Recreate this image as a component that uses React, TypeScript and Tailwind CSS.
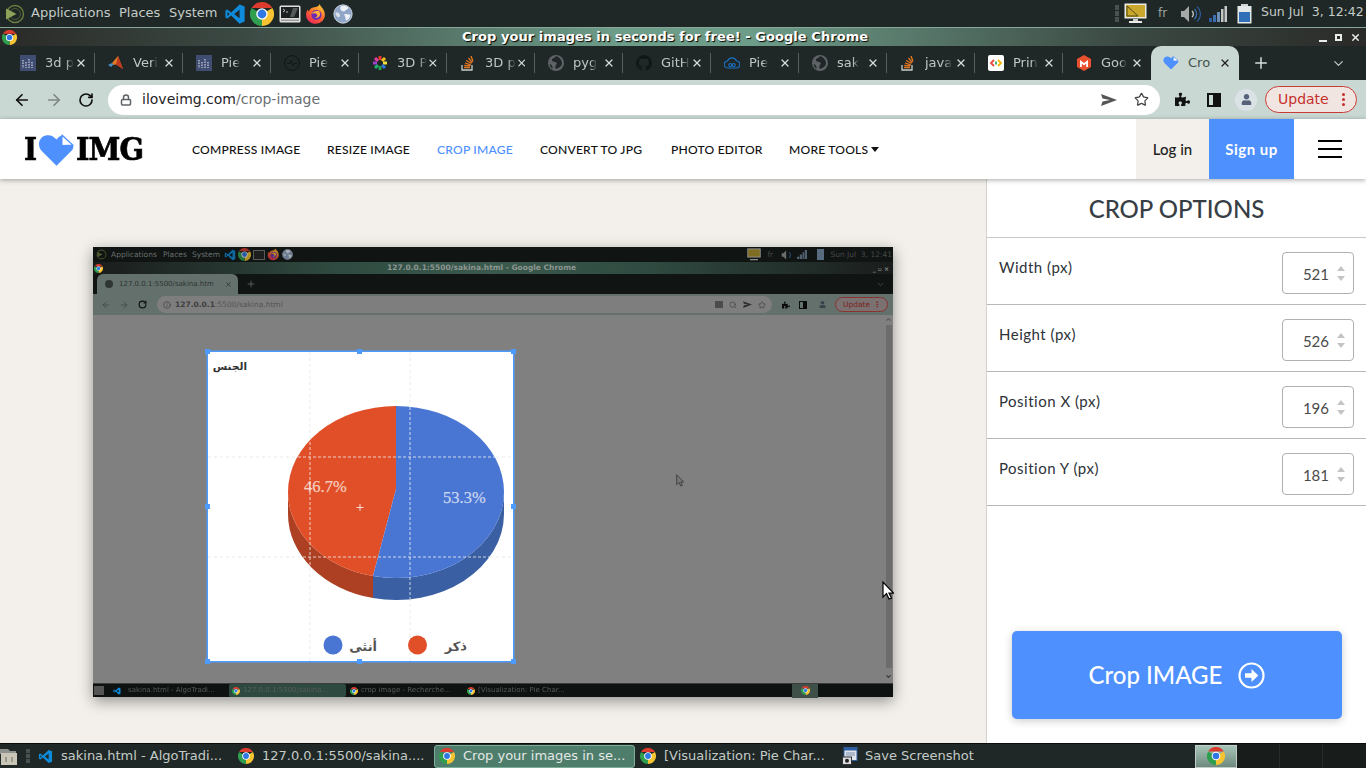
import { ArrowLeft, ArrowRight, RotateCw, Lock, Star, X, Plus, ChevronDown, ChevronUp, Search, Info } from "lucide-react";
import { FaUser, FaPuzzlePiece } from "react-icons/fa";

const UI = "font-['DejaVu_Sans',sans-serif]";
const RALE = "font-['Lato',sans-serif]";

function ChromeIcon({ size = 16 }: { size?: number }) {
  return (
    <svg width={size} height={size} viewBox="0 0 48 48" className="shrink-0">
      <path d="M3.2 12A24 24 0 0 1 44.8 12L24 12Z" fill="#dc3b2e" />
      <path d="M44.8 12A24 24 0 0 1 24 48L24 24Z" fill="#f6c333" />
      <path d="M24 48A24 24 0 0 1 3.2 12L24 24Z" fill="#2f9e4f" />
      <circle cx="24" cy="24" r="11.5" fill="#fff" />
      <circle cx="24" cy="24" r="8.8" fill="#2f78e4" />
    </svg>
  );
}

function VsCode({ size = 22 }: { size?: number }) {
  return (
    <svg width={size} height={size} viewBox="0 0 24 24" className="shrink-0">
      <path d="M17 1.5 7.8 10.4 3.6 7.2 1.5 8.3v7.4l2.1 1.1 4.2-3.2L17 22.5l5.5-2.2V3.7ZM17 7.3v9.4l-6-4.7ZM3.8 9.6 6 12l-2.2 2.4Z" fill="#0f8bdc" />
    </svg>
  );
}

function Firefox({ size = 22 }: { size?: number }) {
  return (
    <svg width={size} height={size} viewBox="0 0 24 24" className="shrink-0">
      <defs>
        <linearGradient id="ffg" x1="0.8" y1="0" x2="0.2" y2="1">
          <stop offset="0" stopColor="#ffd23a" />
          <stop offset="0.5" stopColor="#ff6a2a" />
          <stop offset="1" stopColor="#e8245e" />
        </linearGradient>
      </defs>
      <path d="M16 1c.6 2.500 2.600 3.500 4 6 2.600 4.500 2 9.500-1 12.500a10.500 10.500 0 0 1-16-1C.5 15 .8 10 3 7c.2 1 .7 1.700 1.400 2.200C5 7 6.500 5.600 8 5.200 11 4.300 15.200 4 16 1Z" fill="url(#ffg)" />
      <circle cx="12.500" cy="13" r="5.500" fill="#6c2bb5" />
      <path d="M7 12c2-1.500 5-1 6 .5 1.500 2-1 4-3 3 2 2 6 .5 6.500-3 .2-1.500-.5-3-1.500-4-2-.5-6 0-8 3.500Z" fill="#ffb03a" />
    </svg>
  );
}

function Globe({ size = 20 }: { size?: number }) {
  return (
    <svg width={size} height={size} viewBox="0 0 24 24" className="shrink-0">
      <circle cx="12" cy="12" r="11" fill="#8fa6c9" />
      <circle cx="12" cy="12" r="11" fill="none" stroke="#dfe5ee" strokeWidth="1" />
      <path d="M9 3c3-1.500 7-1 9 1 1 1.500-1 3-3 3.500-1 1.500-3 2-4 1-1-.5-3-2-2-5.500ZM14 12c2 0 5 .5 7 1-.5 3-2 5.500-5 7-1-1.500-1.500-3-1-4-1-1.500-2-3-1-4Z" fill="#eef1f6" />
      <path d="M3 10c2-.5 4 .5 5 2s.5 3-1 4c-2 0-4-2-4-6Z" fill="#d8dfe9" />
    </svg>
  );
}

function Terminal() {
  return (
    <svg width="22" height="18" viewBox="0 0 22 18" className="shrink-0">
      <rect x="0.500" y="0.500" width="21" height="17" rx="1.500" fill="#dfe1df" />
      <rect x="2" y="2" width="18" height="11" fill="#1c2020" />
      <path d="M4 4l2 1.500L4 7M7 7h2" stroke="#e8e8e8" strokeWidth="0.800" fill="none" />
      <path d="M14 3h5l-4 9h-4Z" fill="#555b5a" />
      <rect x="2" y="14.500" width="18" height="1.500" fill="#9a9d9b" />
    </svg>
  );
}

function StartIcon() {
  return (
    <svg width="20" height="20" viewBox="0 0 20 20" className="shrink-0">
      <circle cx="10" cy="10" r="8.500" fill="none" stroke="#6f7f3f" strokeWidth="1.300" />
      <circle cx="10" cy="10" r="5.500" fill="none" stroke="#5c6a38" strokeWidth="0.800" />
      <path d="M1 4.500 11.500 10 1 15.500Z" fill="#8ea35a" />
    </svg>
  );
}

function ScreenTray() {
  return (
    <svg width="23" height="21" viewBox="0 0 23 21" className="shrink-0">
      <rect x="0.500" y="0.500" width="22" height="15" fill="#e9ebe9" />
      <rect x="2" y="2" width="19" height="12" fill="#c9a82c" />
      <path d="M3 3 14 13H3Z" fill="none" stroke="#51461a" strokeWidth="1" />
      <rect x="9" y="16" width="5" height="2" fill="#c8cbc8" />
      <rect x="5" y="18" width="13" height="2" fill="#e9ebe9" />
    </svg>
  );
}

function VolumeTray() {
  return (
    <svg width="21" height="18" viewBox="0 0 21 18" className="shrink-0">
      <path d="M1 6h3l5-5v16l-5-5H1Z" fill="#a5aaa8" />
      <path d="M12 6a4 4 0 0 1 0 6" stroke="#c9ccca" strokeWidth="1.300" fill="none" />
      <path d="M14.500 4a7 7 0 0 1 0 10" stroke="#3a6fb0" strokeWidth="1.300" fill="none" />
      <path d="M17 1.500a10 10 0 0 1 0 15" stroke="#2d5c99" strokeWidth="1.300" fill="none" />
    </svg>
  );
}

function SignalTray() {
  return (
    <svg width="18" height="16" viewBox="0 0 18 16" className="shrink-0">
      <rect x="0" y="12" width="3" height="4" fill="#2f5f9e" />
      <rect x="4" y="9" width="3" height="7" fill="#3c6fb0" />
      <rect x="8" y="6" width="3" height="10" fill="#6c8fb8" />
      <rect x="12" y="3" width="2.500" height="13" fill="#c5c9c7" />
      <rect x="15.500" y="0" width="2.500" height="16" fill="#c5c9c7" />
    </svg>
  );
}

function BatteryTray() {
  return (
    <svg width="15" height="20" viewBox="0 0 15 20" className="shrink-0">
      <rect x="4" y="0" width="7" height="2" fill="#cfd3d1" />
      <rect x="0.500" y="2" width="14" height="17.500" fill="#e4e8e6" />
      <rect x="2" y="8" width="11" height="10" fill="#2f6fb8" />
    </svg>
  );
}

function TrayHandle() {
  return (
    <div className="mr-[5px] flex flex-col gap-[1px]">
      <span className="h-[5px] w-[4px] bg-[#4a504e]" />
      <span className="h-[5px] w-[4px] bg-[#4a504e]" />
      <span className="h-[5px] w-[4px] bg-[#4a504e]" />
    </div>
  );
}

function TopPanel() {
  return (
    <div className={`flex h-[27px] items-center bg-[#1f2826] text-[13px] text-[#c4cbc8] ${UI}`}>
      <div className="ml-[5px] w-[26px]">
        <StartIcon />
      </div>
      <span className="w-[88px] pb-[2px]">Applications</span>
      <span className="w-[50px] pb-[2px]">Places</span>
      <span className="w-[55px] pb-[2px]">System</span>
      <div className="flex items-center gap-[4px]">
        <VsCode />
        <ChromeIcon size={24} />
        <div className="ml-[1px]">
          <Terminal />
        </div>
        <Firefox />
        <div className="ml-[2px]">
          <Globe />
        </div>
      </div>
      <div className="ml-auto flex items-center">
        <TrayHandle />
        <ScreenTray />
        <span className="ml-[11px] w-[22px] pb-[2px] text-[12px] text-[#9da3a1]">fr</span>
        <VolumeTray />
        <div className="ml-[8px]">
          <SignalTray />
        </div>
        <div className="ml-[10px]">
          <BatteryTray />
        </div>
        <span className="ml-[9px] w-[105px] pb-[2px] text-[12.500px] whitespace-pre">Sun Jul  3, 12:42</span>
      </div>
    </div>
  );
}

function TitleBar() {
  return (
    <div className={`flex h-[19px] items-center border-t border-[#86a899] bg-[linear-gradient(90deg,#2a2a28_0%,#3c4a44_18%,#6d9c88_45%,#6d9c88_55%,#3c4a44_82%,#2a2a28_100%)] ${UI}`}>
      <div className="ml-[2px] w-[460px]">
        <ChromeIcon size={15} />
      </div>
      <span className="text-[13px] font-bold tracking-[0.05px] whitespace-nowrap text-white [text-shadow:1px_1px_1px_#000]">
        Crop your images in seconds for free! - Google Chrome
      </span>
      <div className="ml-auto mr-[5px] flex items-center gap-[8px] text-[#e8ecea]">
        <span className="mt-[8px] h-[2px] w-[8px] bg-[#e8ecea]" />
        <span className="h-[7px] w-[7px] border-2 border-[#e8ecea]" />
        <X size={11} strokeWidth={3} />
      </div>
    </div>
  );
}

function TabIcon({ kind }: { kind: string }) {
  if (kind === "bars")
    return (
      <svg width="16" height="16" viewBox="0 0 16 16">
        <rect width="16" height="16" fill="#3f4d72" />
        <path d="M3 5v8M6 7v6M9 4v9M12 7v6" stroke="#e8ebf2" strokeWidth="1" strokeDasharray="1.500 1" />
      </svg>
    );
  if (kind === "matlab")
    return (
      <svg width="16" height="16" viewBox="0 0 16 16">
        <path d="M0 10l4-2 2 1-3 3Z" fill="#4a90c8" />
        <path d="M4 8l6-7 5 13-3-2-3-3-3 1Z" fill="#e07a2a" />
        <path d="M10 1l-2 9 4 2 3 2Z" fill="#c0391f" />
      </svg>
    );
  if (kind === "pulse")
    return (
      <svg width="16" height="16" viewBox="0 0 16 16" fill="none" stroke="#111716" strokeWidth="1">
        <circle cx="8" cy="8" r="7.500" />
        <path d="M3 8.500h3l1-3 2 5 1-2h3" />
      </svg>
    );
  if (kind === "wheel")
    return (
      <svg width="16" height="16" viewBox="0 0 16 16" fill="none" strokeWidth="3">
        <path d="M8 1v4" stroke="#e63a2e" />
        <path d="M13 3l-3 3" stroke="#f4c020" />
        <path d="M15 8h-4" stroke="#f0e040" />
        <path d="M13 13l-3-3" stroke="#2f78e4" />
        <path d="M8 15v-4" stroke="#22a04a" />
        <path d="M3 13l3-3" stroke="#1fb070" />
        <path d="M1 8h4" stroke="#a040d0" />
        <path d="M3 3l3 3" stroke="#e040a0" />
      </svg>
    );
  if (kind === "so")
    return (
      <svg width="16" height="16" viewBox="0 0 16 16" fill="none">
        <path d="M2 10v5h10v-5" stroke="#c8cccb" strokeWidth="1.300" />
        <path d="M4 12.500h6M4.300 10.300l6 .6M5 8l5.800 1.800M6.300 5.500l5.200 3M8.500 3l3.800 4.600M11 1l2 5.500" stroke="#e87922" strokeWidth="1.300" />
      </svg>
    );
  if (kind === "globe")
    return (
      <svg width="16" height="16" viewBox="0 0 16 16">
        <circle cx="8" cy="8" r="8" fill="#5f6368" />
        <path d="M8 1c-1 2-3 2-4 3s1 3 3 3 2 2 1 3-1 3 0 4c3-1 6-3 6-6s-3-6-6-7ZM1.500 9c1 0 2.500 1 3 3 .2 1 0 1.500-.5 1.500C3 12.500 2 11 1.500 9Z" fill="#1f2826" />
      </svg>
    );
  if (kind === "github")
    return (
      <svg width="16" height="16" viewBox="0 0 16 16">
        <path d="M8 0a8 8 0 0 0-2.500 15.600c.4 0 .5-.2.500-.4v-1.400c-2.200.5-2.700-1-2.700-1-.4-.9-.9-1.200-.9-1.200-.7-.5 0-.5 0-.5.800.1 1.200.8 1.200.8.700 1.200 1.900.9 2.300.7.100-.5.300-.9.500-1.100-1.800-.2-3.600-.9-3.600-4 0-.9.300-1.600.8-2.100-.1-.2-.4-1 .1-2.100 0 0 .7-.2 2.200.8a7.600 7.600 0 0 1 4 0c1.500-1 2.200-.8 2.200-.8.500 1.100.2 1.900.1 2.100.5.600.8 1.300.8 2.100 0 3.100-1.900 3.800-3.700 4 .3.300.6.800.6 1.500v2.200c0 .2.100.5.600.4A8 8 0 0 0 8 0Z" fill="#111716" />
      </svg>
    );
  if (kind === "cloud")
    return (
      <svg width="16" height="16" viewBox="0 0 16 16" fill="none" stroke="#1b6fc4" strokeWidth="1.200">
        <path d="M4 13a3.500 3.500 0 0 1-.5-7A4.800 4.800 0 0 1 12.500 6 3.500 3.500 0 0 1 12 13Z" />
        <circle cx="6.300" cy="10" r="1.500" />
        <circle cx="9.700" cy="10" r="1.500" />
      </svg>
    );
  if (kind === "colab")
    return (
      <svg width="16" height="16" viewBox="0 0 16 16">
        <rect width="16" height="16" rx="2" fill="#fff" />
        <path d="M6 5 3 8l3 3" stroke="#e8453c" strokeWidth="1.800" fill="none" />
        <path d="M10 5l3 3-3 3" stroke="#f4b400" strokeWidth="1.800" fill="none" />
        <path d="M8 6.500v3" stroke="#34a853" strokeWidth="1.800" />
      </svg>
    );
  if (kind === "box")
    return (
      <svg width="16" height="16" viewBox="0 0 16 16">
        <path d="M8 0l7 4v8l-7 4-7-4V4Z" fill="#e8502e" />
        <path d="M4 12V5l4 3 4-3v7h-1.800V8.500L8 10.500 5.800 8.500V12Z" fill="#fff" />
      </svg>
    );
  return <Heart size={16} />;
}

function Heart({ size }: { size: number }) {
  return (
    <svg width={size} height={size} viewBox="0 0 34 30" className="shrink-0">
      <path d="M17 29 3 15C-1 10 1 2 8 1c4-.5 7 1.500 9 4 2-2.500 3.500-3.500 6-4l9 9c1 2 0 4-1 5Z" fill="#4d90fe" />
      <path d="M22 1l10 9-10 .5Z" fill="#fff" stroke="#4d90fe" strokeWidth="1" />
    </svg>
  );
}

const TABS = [
  { icon: "bars", label: "3d p" },
  { icon: "matlab", label: "Veri" },
  { icon: "bars", label: "Pie" },
  { icon: "pulse", label: "Pie" },
  { icon: "wheel", label: "3D P" },
  { icon: "so", label: "3D p" },
  { icon: "globe", label: "pyg" },
  { icon: "github", label: "GitH" },
  { icon: "cloud", label: "Pie" },
  { icon: "globe", label: "sak" },
  { icon: "so", label: "java" },
  { icon: "colab", label: "Prin" },
  { icon: "box", label: "Goo" },
];

function TabStrip() {
  return (
    <div className={`flex h-[34px] items-end bg-[#1f2826] pl-[7px] text-[13px] ${UI}`}>
      {TABS.map((t, i) => (
        <div key={i} className="relative flex h-[34px] w-[88px] items-center pl-[13px] pr-[8px] text-[#c0c6c4]">
          <div className="w-[25px] shrink-0">
            <TabIcon kind={t.icon} />
          </div>
          <span className="whitespace-nowrap [mask-image:linear-gradient(90deg,#000_72%,transparent)]">{t.label}</span>
          <X size={12} strokeWidth={2.500} className="ml-auto text-[#d8dcda]" />
          {i < 12 && <span className="absolute right-0 top-[7px] h-[20px] w-px bg-[#565d5b]" />}
        </div>
      ))}
      <div className="relative flex h-[34px] w-[88px] items-center rounded-t-[10px] bg-[#c9d8d3] pl-[12px] pr-[8px] text-[#45504d]">
        <div className="w-[25px] shrink-0">
          <TabIcon kind="heart" />
        </div>
        <span className="whitespace-nowrap">Cro</span>
        <X size={12} strokeWidth={2.500} className="ml-auto text-[#222]" />
      </div>
      <div className="flex h-[34px] w-[44px] items-center justify-center text-[#d8dcda]">
        <Plus size={18} strokeWidth={2} />
      </div>
      <div className="ml-auto mr-[20px] flex h-[34px] items-center text-[#c0c6c4]">
        <ChevronDown size={15} strokeWidth={2} />
      </div>
    </div>
  );
}

function Toolbar() {
  return (
    <div className={`flex h-[39px] items-center bg-[#c9d8d3] ${UI}`}>
      <ArrowLeft size={18} strokeWidth={2.300} className="ml-[13px] text-[#111]" />
      <ArrowRight size={18} strokeWidth={2.300} className="ml-[14px] text-[#7d8785]" />
      <RotateCw size={16} strokeWidth={2.500} className="ml-[15px] text-[#111]" />
      <div className="ml-[14px] flex h-[30px] w-[1052px] items-center rounded-full bg-white pl-[12px] pr-[10px]">
        <Lock size={12} strokeWidth={3} className="text-[#5f6368]" />
        <span className="ml-[10px] text-[14px] whitespace-nowrap text-[#1f2428]">
          iloveimg.com<span className="text-[#6a7074]">/crop-image</span>
        </span>
        <svg width="16" height="12" viewBox="0 0 16 12" className="ml-auto mr-[17px]">
          <path d="M0 0l16 6L0 12l1.500-4.500L9 6 1.500 4.500Z" fill="#555" />
        </svg>
        <Star size={15} strokeWidth={2} className="mr-[1px] text-[#444]" />
      </div>
      <FaPuzzlePiece size={15} className="ml-[15px] text-[#111]" />
      <div className="ml-[17px] flex h-[14px] w-[14px] justify-end border-2 border-[#111]">
        <span className="h-full w-[6px] bg-[#111]" />
      </div>
      <div className="ml-[14px] flex h-[22px] w-[22px] items-center justify-center rounded-full bg-[#dbe2e6] text-[#56627a]">
        <FaUser size={11} />
      </div>
      <div className="ml-[8px] flex h-[27px] w-[92px] items-center rounded-full border border-[#c93b35] bg-[#f1e5e2] pl-[12px] pr-[11px] text-[14px] text-[#c5302b]">
        Update
        <span className="ml-auto flex flex-col gap-[2px]">
          <span className="h-[3px] w-[3px] rounded-full bg-[#c5302b]" />
          <span className="h-[3px] w-[3px] rounded-full bg-[#c5302b]" />
          <span className="h-[3px] w-[3px] rounded-full bg-[#c5302b]" />
        </span>
      </div>
    </div>
  );
}

const NAV = [
  { label: "COMPRESS IMAGE", w: "w-[135px]" },
  { label: "RESIZE IMAGE", w: "w-[110px]" },
  { label: "CROP IMAGE", w: "w-[103px]", active: true },
  { label: "CONVERT TO JPG", w: "w-[131px]" },
  { label: "PHOTO EDITOR", w: "w-[118px]" },
];

function SiteHeader() {
  return (
    <div className={`relative z-10 flex h-[60px] items-center bg-white shadow-[0_1px_5px_rgba(0,0,0,0.35)] ${RALE}`}>
      <div className="ml-[24px] flex w-[168px] items-center font-['DejaVu_Serif',serif] text-[31px] font-bold leading-none text-black [-webkit-text-stroke:0.7px_black]">
        <span className="w-[14px] origin-left scale-x-[0.9]">I</span>
        <div className="w-[38px] pt-[3px]">
          <Heart size={37} />
        </div>
        <span className="origin-left scale-x-[0.93] tracking-[-1px]">IMG</span>
      </div>
      <nav className="flex items-center pt-[2px] text-[12.100px] font-medium tracking-[0.2px] text-[#111]">
        {NAV.map((n) => (
          <span key={n.label} className={`${n.w} whitespace-nowrap ${n.active ? "text-[#4d90fe]" : ""}`}>
            {n.label}
          </span>
        ))}
        <span className="flex items-center whitespace-nowrap">
          MORE TOOLS
          <span className="ml-[3px] h-0 w-0 border-x-[4px] border-t-[5px] border-x-transparent border-t-[#111]" />
        </span>
      </nav>
      <div className="ml-auto flex h-full items-stretch">
        <div className="flex w-[73px] items-center justify-center bg-[#f3f0eb] text-[15px] font-medium text-[#222]">Log in</div>
        <div className="flex w-[85px] items-center justify-center bg-[#4d90fe] text-[15px] font-bold tracking-[0.5px] text-white">Sign up</div>
        <div className="flex w-[72px] flex-col items-center justify-center gap-[6px]">
          <span className="h-[2px] w-[24px] bg-black" />
          <span className="h-[2px] w-[24px] bg-black" />
          <span className="h-[2px] w-[24px] bg-black" />
        </div>
      </div>
    </div>
  );
}

function MiniPanel() {
  return (
    <div className="flex h-[15px] items-center bg-[#101413] pl-[3px] text-[7.500px] text-[#6a706e]">
      <div className="w-[15px]">
        <svg width="11" height="11" viewBox="0 0 20 20">
          <circle cx="10" cy="10" r="8" fill="none" stroke="#3f4a24" strokeWidth="2" />
          <path d="M2 5l10 5-10 5Z" fill="#4d5a30" />
        </svg>
      </div>
      <span className="w-[52px]">Applications</span>
      <span className="w-[29px]">Places</span>
      <span className="w-[32px]">System</span>
      <div className="flex items-center gap-[2px] opacity-70">
        <VsCode size={12} />
        <ChromeIcon size={13} />
        <span className="h-[10px] w-[12px] border border-[#777] bg-[#222]" />
        <Firefox size={13} />
        <Globe size={11} />
      </div>
      <div className="ml-auto mr-[1px] flex items-center opacity-60">
        <svg width="14" height="13" viewBox="0 0 23 21" className="mr-[6px] shrink-0">
          <rect x="0.500" y="0.500" width="22" height="15" fill="#e9ebe9" />
          <rect x="2" y="2" width="19" height="12" fill="#c9a82c" />
          <rect x="5" y="18" width="13" height="2" fill="#e9ebe9" />
        </svg>
        <span className="w-[14px]">fr</span>
        <svg width="12" height="10" viewBox="0 0 21 18" className="mr-[4px] shrink-0">
          <path d="M1 6h3l5-5v16l-5-5H1Z" fill="#a5aaa8" />
          <path d="M14.500 4a7 7 0 0 1 0 10" stroke="#3a6fb0" strokeWidth="2" fill="none" />
        </svg>
        <svg width="10" height="9" viewBox="0 0 18 16" className="mr-[10px] shrink-0">
          <path d="M0 12h4v4H0ZM5 8h4v8H5ZM10 4h3v12h-3ZM14 0h4v16h-4Z" fill="#7d93ab" />
        </svg>
        <span className="mr-[6px] h-[11px] w-[7px] bg-[#8ba6c6]" />
        <span className="whitespace-pre">Sun Jul  3, 12:41</span>
      </div>
    </div>
  );
}

function MiniChrome() {
  return (
    <>
      <div className="flex h-[12px] items-center bg-[linear-gradient(90deg,#1a1c1b,#2f4a40_30%,#3a5a4d_50%,#2f4a40_70%,#1a1c1b)] text-[7.500px] font-bold text-[#8d9592]">
        <div className="ml-[1px] w-[293px]">
          <ChromeIcon size={9} />
        </div>
        <span>127.0.0.1:5500/sakina.html - Google Chrome</span>
        <span className="ml-auto mr-[4px] text-[6px]">_ ▫ ×</span>
      </div>
      <div className="flex h-[20px] items-end bg-[#101413] pl-[4px] text-[7px]">
        <div className="flex h-[20px] w-[141px] items-center rounded-t-[6px] bg-[#63706c] pl-[8px] pr-[6px] text-[#2e3533]">
          <span className="mr-[6px] h-[8px] w-[8px] rounded-full bg-[#2e3533]" />
          <span className="whitespace-nowrap">127.0.0.1:5500/sakina.htm</span>
          <X size={7} strokeWidth={3} className="ml-auto" />
        </div>
        <div className="flex h-[20px] w-[26px] items-center justify-center text-[#62686a]">
          <Plus size={10} />
        </div>
        <ChevronDown size={9} className="mb-[5px] ml-auto mr-[8px] text-[#555]" />
      </div>
      <div className="flex h-[21px] items-center bg-[#63706c]">
        <ArrowLeft size={10} className="ml-[8px] text-[#3f4a47]" />
        <ArrowRight size={10} className="ml-[8px] text-[#3f4a47]" />
        <RotateCw size={9} strokeWidth={3} className="ml-[9px] text-[#0d0f0f]" />
        <div className="ml-[10px] flex h-[17px] w-[615px] items-center rounded-full bg-[#7e7e7e] pl-[6px] pr-[6px] text-[7.500px] text-[#404040]">
          <Info size={8} />
          <span className="ml-[4px]">
            <b>127.0.0.1</b>
            <span className="text-[#555]">:5500/sakina.html</span>
          </span>
          <div className="ml-auto flex items-center gap-[6px] text-[#404040]">
            <span className="h-[7px] w-[8px] bg-[#4c4c4c]" />
            <Search size={8} />
            <svg width="9" height="7" viewBox="0 0 16 12">
              <path d="M0 0l16 6L0 12l1.500-4.500L9 6 1.500 4.500Z" fill="#303030" />
            </svg>
            <Star size={8} />
          </div>
        </div>
        <FaPuzzlePiece size={8} className="ml-[10px] text-[#0a0a0a]" />
        <div className="ml-[9px] flex h-[8px] w-[8px] justify-end border border-[#0a0a0a]">
          <span className="h-full w-[3px] bg-[#0a0a0a]" />
        </div>
        <FaUser size={7} className="ml-[12px] text-[#38404a]" />
        <div className="ml-[9px] flex h-[15px] w-[53px] items-center rounded-full border border-[#8a3230] bg-[#7a7170] pl-[7px] pr-[6px] text-[7.500px] text-[#7a2320]">
          Update
          <span className="ml-auto font-bold">⋮</span>
        </div>
      </div>
    </>
  );
}

function MiniTaskbar() {
  return (
    <div className="flex h-[14px] items-center border-t border-[#3a3d3c] bg-[#0e1211] text-[7px] text-[#565c5a]">
      <span className="ml-[1px] h-[9px] w-[10px] bg-[#555]" />
      <div className="ml-[9px] w-[15px]">
        <VsCode size={8} />
      </div>
      <span className="w-[101px] whitespace-nowrap">sakina.html - AlgoTradi...</span>
      <div className="flex h-[13px] w-[117px] items-center gap-[3px] rounded-[2px] bg-[#2e4a40] pl-[3px] whitespace-nowrap">
        <ChromeIcon size={8} />
        127.0.0.1:5500/sakina....
      </div>
      <div className="ml-[4px] flex w-[117px] items-center gap-[3px] whitespace-nowrap">
        <ChromeIcon size={8} />
        crop image - Recherche...
      </div>
      <div className="flex w-[325px] items-center gap-[3px] whitespace-nowrap">
        <ChromeIcon size={8} />
        [Visualization: Pie Char...
      </div>
      <div className="flex h-[14px] w-[26px] items-center justify-center bg-[#3f5048]">
        <ChromeIcon size={9} />
      </div>
    </div>
  );
}

function PieChart() {
  return (
    <svg viewBox="208 352 305 309" className="block h-full w-full bg-white">
      <defs>
        <clipPath id="pieclip">
          <path d="M288 492A108 86 0 0 1 504 492V514A108 86 0 0 1 288 514Z" />
        </clipPath>
      </defs>
      <g stroke="#e4e4e4" strokeWidth="0.800" strokeDasharray="3 3">
        <line x1="310" y1="352" x2="310" y2="661" />
        <line x1="410" y1="352" x2="410" y2="661" />
        <line x1="208" y1="457" x2="513" y2="457" />
        <line x1="208" y1="557" x2="513" y2="557" />
      </g>
      <text x="247" y="370" textAnchor="start" direction="rtl" fontFamily="DejaVu Sans" fontWeight="700" fontSize="10.500" fill="#333">الجنس</text>
      <path d="M288 492V514A108 86 0 0 0 373 598V576A108 86 0 0 1 288 492Z" fill="#ad3f22" />
      <path d="M373 576V598A108 86 0 0 0 504 514V492A108 86 0 0 1 373 576Z" fill="#3a5fa3" />
      <path d="M396 489L396 406A108 86 0 0 0 288 492A108 86 0 0 0 373 576Z" fill="#e04f28" />
      <path d="M396 489L373 576A108 86 0 0 0 504 492A108 86 0 0 0 396 406Z" fill="#4a76d3" />
      <text x="304" y="492" fontFamily="Liberation Serif" fontSize="16.500" fill="#f6cdbf" stroke="#f6cdbf" strokeWidth="0.250">46.7%</text>
      <text x="443" y="503" fontFamily="Liberation Serif" fontSize="16.500" fill="#c8d5f2" stroke="#c8d5f2" strokeWidth="0.250">53.3%</text>
      <g clipPath="url(#pieclip)" stroke="#f3f3f3" strokeWidth="0.800" strokeDasharray="3 2">
        <line x1="310" y1="352" x2="310" y2="661" />
        <line x1="410" y1="352" x2="410" y2="661" />
        <line x1="208" y1="457" x2="513" y2="457" />
        <line x1="208" y1="557" x2="513" y2="557" />
      </g>
      <path d="M356.500 507.500h7M360 504v7" stroke="#fff" strokeWidth="0.800" />
      <circle cx="333" cy="645" r="9.500" fill="#4a76d3" />
      <circle cx="417.500" cy="645" r="9.500" fill="#e04f28" />
      <text x="377" y="651" textAnchor="start" direction="rtl" fontFamily="DejaVu Sans" fontWeight="700" fontSize="13" fill="#555">أنثى</text>
      <text x="467" y="651" textAnchor="start" direction="rtl" fontFamily="DejaVu Sans" fontWeight="700" fontSize="13" fill="#555">ذكر</text>
    </svg>
  );
}

const HANDLES = [
  "left-[-3px] top-[-3px]",
  "left-[149px] top-[-3px]",
  "right-[-3px] top-[-3px]",
  "left-[-3px] top-[152px]",
  "right-[-3px] top-[152px]",
  "left-[-3px] bottom-[-3px]",
  "left-[149px] bottom-[-3px]",
  "right-[-3px] bottom-[-3px]",
];

function Cursor({ size, ghost }: { size: number; ghost?: boolean }) {
  return (
    <svg width={size} height={size * 1.6} viewBox="0 0 12 19">
      <path d="M1 1v15l3.500-3.500L7 18l2.500-1-2.500-5h4.500Z" fill={ghost ? "#777" : "#fff"} stroke={ghost ? "#333" : "#000"} strokeWidth="1.200" />
    </svg>
  );
}

function ImageStage() {
  return (
    <div className="relative flex h-[450px] w-[800px] flex-col shadow-[0_4px_14px_rgba(0,0,0,0.4)]">
      <div className={`flex h-full flex-col blur-[0.5px] ${UI}`}>
        <MiniPanel />
        <MiniChrome />
        <div className="relative flex-1 bg-[#808080]">
          <div className="absolute right-0 top-0 flex h-full w-[9px] flex-col items-center bg-[#808080]">
            <ChevronUp size={7} strokeWidth={4} className="mt-[1px] text-[#5a5a5a]" />
            <div className="mt-[2px] h-[343px] w-[6px] bg-[#6c6c6c]" />
            <ChevronDown size={7} strokeWidth={4} className="mt-[5px] text-[#3a3a3a]" />
          </div>
        </div>
        <MiniTaskbar />
      </div>
      <div className="absolute left-[115px] top-[105px] h-[309px] w-[305px] shadow-[0_0_0_1.500px_#4d9bff]">
        <PieChart />
        {HANDLES.map((h) => (
          <span key={h} className={`absolute h-[5px] w-[5px] bg-[#4d9bff] ${h}`} />
        ))}
      </div>
      <div className="absolute left-[583px] top-[227px]">
        <Cursor size={8} ghost />
      </div>
    </div>
  );
}

const OPTIONS = [
  { label: "Width (px)", value: 521 },
  { label: "Height (px)", value: 526 },
  { label: "Position X (px)", value: 196 },
  { label: "Position Y (px)", value: 181 },
];

function Sidebar() {
  return (
    <aside className={`flex w-[380px] flex-col border-l border-[#d4d2cc] bg-white ${RALE}`}>
      <h2 className="flex h-[59px] items-center justify-center border-b border-[#c8c8c8] pt-[2px] text-[24px] font-medium text-[#383e45]">
        CROP OPTIONS
      </h2>
      {OPTIONS.map((o) => (
        <div key={o.label} className="flex h-[67px] items-start justify-between border-b border-[#b8b8b8] pl-[12px] pr-[12px] pt-[14px]">
          <label className="pt-[4px] text-[15px] tracking-[0.5px] text-[#2d3238]">{o.label}</label>
          <div className="flex h-[42px] w-[72px] items-center justify-end rounded-[4px] border border-[#b0b0b0] pr-[8px] text-[15px] text-[#4a4a4a]">
            <span className="mt-[2px]">{o.value}</span>
            <span className="ml-[8px] flex flex-col gap-[5px]">
              <span className="h-0 w-0 border-x-[4px] border-b-[5px] border-x-transparent border-b-[#c4c4c4]" />
              <span className="h-0 w-0 border-x-[4px] border-t-[5px] border-x-transparent border-t-[#c4c4c4]" />
            </span>
          </div>
        </div>
      ))}
      <button className="mt-auto mb-[24px] ml-[25px] flex h-[88px] w-[330px] items-center justify-center gap-[16px] rounded-[5px] bg-[#4d90fe] text-[24px] font-medium text-white shadow-[0_2px_8px_rgba(0,0,0,0.2)]">
        Crop IMAGE
        <svg width="27" height="27" viewBox="0 0 27 27">
          <circle cx="13.500" cy="13.500" r="12" fill="none" stroke="#fff" strokeWidth="2.200" />
          <path d="M7 11.300h6.500V7l6.800 6.500-6.800 6.500v-4.300H7Z" fill="#fff" />
        </svg>
      </button>
    </aside>
  );
}

function FolderIcon() {
  return (
    <svg width="20" height="20" viewBox="0 0 20 20" className="shrink-0">
      <path d="M0 3h8l2 2h6v3H0Z" fill="#8f928c" />
      <rect x="1" y="7" width="16" height="12" fill="#c9c6b8" />
      <path d="M6 11v5M12 11v5" stroke="#6d6b60" strokeWidth="1" />
    </svg>
  );
}

function ScreenshotIcon() {
  return (
    <svg width="16" height="18" viewBox="0 0 16 18" className="shrink-0">
      <rect x="2" y="0.500" width="13" height="13" fill="#dfe6ee" stroke="#2f5f9e" />
      <rect x="2" y="0.500" width="13" height="3" fill="#2f5f9e" />
      <path d="M4 6h9M4 8h9" stroke="#7a8ea8" />
      <rect x="0.500" y="10" width="9" height="7.500" fill="#ddd" stroke="#333" />
      <circle cx="5" cy="13.700" r="2" fill="#222" />
    </svg>
  );
}

function Taskbar() {
  return (
    <div className={`flex h-[25px] items-center border-t border-[#0b0d0c] bg-[#1f2826] text-[13px] text-[#c4cbc8] ${UI}`}>
      <FolderIcon />
      <div className="ml-[6px] flex flex-col gap-[1px]">
        <span className="h-[4px] w-[4px] bg-[#4a504e]" />
        <span className="h-[4px] w-[4px] bg-[#4a504e]" />
        <span className="h-[4px] w-[4px] bg-[#4a504e]" />
      </div>
      <div className="flex w-[208px] items-center pl-[8px]">
        <VsCode size={15} />
        <span className="ml-[8px] whitespace-nowrap">sakina.html - AlgoTradi...</span>
      </div>
      <div className="flex w-[196px] items-center">
        <ChromeIcon />
        <span className="ml-[8px] whitespace-nowrap">127.0.0.1:5500/sakina....</span>
      </div>
      <div className="flex h-[23px] w-[201px] items-center rounded-[3px] border border-[#7cae9a] bg-[#4f7d6c] pl-[4px] text-[#e2e8e5]">
        <ChromeIcon />
        <span className="ml-[8px] whitespace-nowrap">Crop your images in se...</span>
      </div>
      <div className="ml-[5px] flex w-[202px] items-center">
        <ChromeIcon />
        <span className="ml-[8px] whitespace-nowrap">[Visualization: Pie Char...</span>
      </div>
      <ScreenshotIcon />
      <span className="ml-[7px] w-[330px] whitespace-nowrap">Save Screenshot</span>
      <div className="flex h-[23px] w-[42px] items-center justify-center border border-[#c2ccc8] bg-[linear-gradient(180deg,#a6c4b7,#6e8a7e)]">
        <ChromeIcon size={18} />
      </div>
      <div className="h-full w-[43px] border-r border-[#262c2a] bg-[#181d1c]" />
      <div className="h-full w-[43px] border-r border-[#262c2a] bg-[#181d1c]" />
      <div className="h-full flex-1 bg-[#181d1c]" />
    </div>
  );
}

export default function App() {
  return (
    <div className="relative flex h-[768px] w-[1366px] flex-col overflow-hidden bg-[#f3f0eb]">
      <TopPanel />
      <TitleBar />
      <TabStrip />
      <Toolbar />
      <SiteHeader />
      <div className="flex h-[564px] flex-1">
        <main className="flex w-[986px] justify-center pt-[68px]">
          <ImageStage />
        </main>
        <Sidebar />
      </div>
      <Taskbar />
      <div className="absolute left-[882px] top-[581px] z-20">
        <Cursor size={12} />
      </div>
    </div>
  );
}
